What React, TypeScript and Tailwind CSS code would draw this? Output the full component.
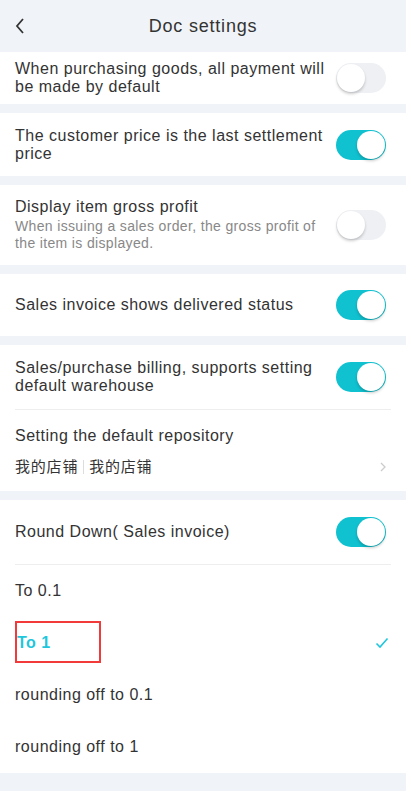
import { useState } from "react";

function Toggle({ on }: { on: boolean }) {
  return (
    <div
      className={
        "relative w-[50px] h-[30px] rounded-full shrink-0 " +
        (on ? "bg-[#10c1d0]" : "bg-[#eef0f4]")
      }
    >
      <div
        className={
          "absolute top-[1px] w-[28px] h-[28px] rounded-full bg-white shadow-[0_2px_3px_rgba(0,0,0,0.2)] " +
          (on ? "left-[21px]" : "left-[1px]")
        }
      />
    </div>
  );
}

function ToggleRow({ title, sub, on }: { title: string; sub?: string; on: boolean }) {
  return (
    <div className="flex items-center justify-between px-[15px] gap-[4px]">
      <div className="flex-1">
        <div className="text-[16px] leading-[18px] tracking-[0.5px] text-[#333]">{title}</div>
        {sub && (
          <div className="text-[14px] leading-[17px] tracking-[0.35px] text-[#888] mt-[2px] pr-[6px]">{sub}</div>
        )}
      </div>
      <div className="pr-[5px]">
        <Toggle on={on} />
      </div>
    </div>
  );
}

export default function App() {
  const [rounding] = useState("To 1");
  const options = ["To 0.1", "To 1", "rounding off to 0.1", "rounding off to 1"];

  return (
    <main
      className="w-[406px] h-[791px] overflow-hidden bg-[#f0f3f7] flex flex-col"
      style={{ fontFamily: '"Liberation Sans", "Noto Sans CJK SC", sans-serif' }}
    >
      <header className="h-[52px] shrink-0 flex items-center relative">
        <svg className="absolute left-[14px] top-[17px]" width="12" height="18" viewBox="0 0 12 18">
          <path d="M9 2 L3 9 L9 16" fill="none" stroke="#333" strokeWidth="1.8" />
        </svg>
        <h1 className="w-full text-center text-[18px] leading-[20px] tracking-[0.8px] text-[#333]">
          Doc settings
        </h1>
      </header>

      <section className="bg-white h-[52px] flex flex-col justify-center">
        <ToggleRow title="When purchasing goods, all payment will be made by default" on={false} />
      </section>

      <section className="bg-white h-[63px] mt-[9px] flex flex-col justify-center">
        <ToggleRow title="The customer price is the last settlement price" on={true} />
      </section>

      <section className="bg-white h-[80px] mt-[9px] flex flex-col justify-center">
        <ToggleRow
          title="Display item gross profit"
          sub="When issuing a sales order, the gross profit of the item is displayed."
          on={false}
        />
      </section>

      <section className="bg-white h-[62px] mt-[9px] flex flex-col justify-center">
        <ToggleRow title="Sales invoice shows delivered status" on={true} />
      </section>

      <section className="bg-white mt-[9px]">
        <div className="h-[64px] flex flex-col justify-center">
          <ToggleRow title="Sales/purchase billing, supports setting default warehouse" on={true} />
        </div>
        <div className="mx-[15px] border-t border-[#eeeeee]" />
        <div className="px-[15px] pt-[17px] pb-[14px] flex items-end justify-between">
          <div>
            <div className="text-[16px] leading-[18px] tracking-[0.5px] text-[#333]">
              Setting the default repository
            </div>
            <div className="mt-[12px] text-[15px] leading-[20px] tracking-[0.8px] text-[#333] flex items-center">
              <span>我的店铺</span>
              <span className="mx-[5px] h-[14px] border-l border-[#ddd]" />
              <span>我的店铺</span>
            </div>
          </div>
          <svg width="8" height="12" viewBox="0 0 8 12" className="mb-[4px] mr-[4px]">
            <path d="M2 2 L6 6 L2 10" fill="none" stroke="#ccc" strokeWidth="1.3" />
          </svg>
        </div>
      </section>

      <section className="bg-white mt-[9px]">
        <div className="h-[64px] flex flex-col justify-center">
          <ToggleRow title="Round Down( Sales invoice)" on={true} />
        </div>
        <div className="mx-[15px] border-t border-[#eeeeee]" />
        <div className="flex flex-col">
          {options.map((o) => (
            <div
              key={o}
              className="h-[52px] px-[15px] flex items-center justify-between text-[16px] tracking-[0.5px]"
            >
              {o === rounding ? (
                <span className="relative ml-[2px] font-bold text-[#1fc6dc]">
                  {o}
                  <span className="absolute left-[-2px] top-[-10px] w-[86px] h-[42px] border-2 border-[#f23a3a]" />
                </span>
              ) : (
                <span className="text-[#333]">{o}</span>
              )}
              {o === rounding && (
                <svg width="14" height="12" viewBox="0 0 14 12" className="mr-[2px]">
                  <path d="M1.5 6.5 L5 10 L12.5 1.5" fill="none" stroke="#1fc6dc" strokeWidth="1.6" />
                </svg>
              )}
            </div>
          ))}
        </div>
      </section>
    </main>
  );
}
